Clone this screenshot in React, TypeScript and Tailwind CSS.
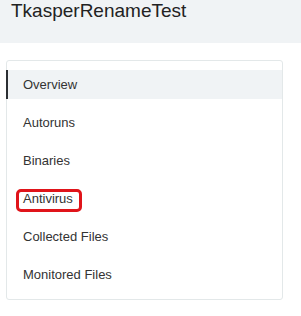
import React from 'react';

const items = ['Overview', 'Autoruns', 'Binaries', 'Antivirus', 'Collected Files', 'Monitored Files'];

const App: React.FC = () => {
  return (
    <div className="min-h-screen bg-white" style={{ fontFamily: '"Liberation Sans", Arial, sans-serif' }}>
      <div className="h-[43px] bg-[#f0f3f5] px-[11px]">
        <h1 className="text-[19px] leading-[22px] text-[#222]">TkasperRenameTest</h1>
      </div>

      <div className="ml-[6px] mt-[17px] w-[277px] h-[240px] rounded-[3px] border border-[#e3e8e9] pt-[9px] pb-[10px]">
        <ul className="flex flex-col gap-[9px]">
          {items.map((item, i) => (
            <li
              key={item}
              className={
                'relative -ml-px flex h-[29px] items-center border-l-2 pl-[15px] text-[13px] text-[#333] ' +
                (i === 0 ? 'border-[#2b2f33] bg-[#f0f3f5]' : 'border-transparent')
              }
            >
              {item}
              {item === 'Antivirus' && (
                <span className="absolute left-[8px] top-[5px] h-[23px] w-[66px] rounded-[5px] border-[3px] border-[#e0141a]" />
              )}
            </li>
          ))}
        </ul>
      </div>
    </div>
  );
};

export default App;
